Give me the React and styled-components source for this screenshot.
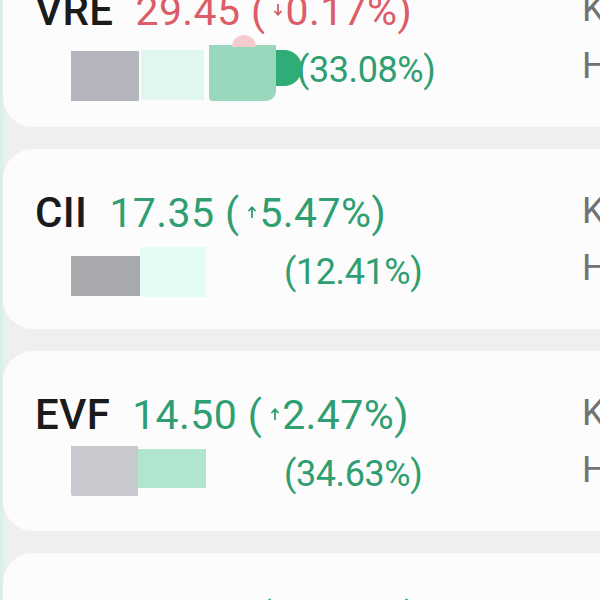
import React from 'react'
import styled, { createGlobalStyle } from 'styled-components'

const Global = createGlobalStyle`
    html, body {
        margin: 0;
        padding: 0;
        height: 600px;
        overflow: hidden;
        background: linear-gradient(to right, #d6efe5 0, #e6f1ec 4px, #efefef 9px);
        font-family: Roboto, "Liberation Sans", sans-serif;
    }
`

const List = styled.div`
    display: flex;
    flex-direction: column;
    gap: 22px;
    margin-top: -53px;
`

const Card = styled.div`
    margin-left: 3px;
    width: 640px;
    height: 180px;
    box-sizing: border-box;
    background: #fcfcfc;
    border-radius: 30px;
    padding: 40px 0 0 32px;
    display: grid;
    grid-template-columns: 547px auto;
    overflow: hidden;
`

const Main = styled.div`
    display: flex;
    flex-direction: column;
    gap: 14px;
`

const TopRow = styled.div`
    display: flex;
    align-items: baseline;
    height: 47px;
    line-height: 47px;
    font-size: 41px;
    white-space: nowrap;
`

const Ticker = styled.span`
    color: #1b1b1b;
    font-weight: 500;
    font-size: 42px;
    margin-right: 22px;
    letter-spacing: 0.4px;
`

const Price = styled.span`
    color: ${p => (p.$down ? '#dc5c68' : '#2f9e71')};
    letter-spacing: 0.4px;
`

const Arrow = styled.svg`
    width: 8px;
    height: 12px;
    margin: 0 3px 0 9px;
    vertical-align: 9px;
`

const BottomRow = styled.div`
    display: flex;
    align-items: center;
    height: 44px;
    padding-left: 36px;
    font-size: 36px;
    line-height: 44px;
    color: #2f9e71;
    white-space: nowrap;
    letter-spacing: -0.4px;
`

const Redact = styled.div`
    display: flex;
    align-items: flex-start;
    align-self: center;
    height: 50px;
    width: ${p => p.$w}px;
    flex-shrink: 0;
`

const Block = styled.div`
    position: relative;
    flex-shrink: 0;
    width: ${p => p.$w}px;
    height: ${p => p.$h}px;
    margin-top: ${p => p.$top || 0}px;
    margin-left: ${p => p.$gap || 0}px;
    background: ${p => p.$bg};
    border-radius: ${p => p.$r || '0'};
`

const Bump = styled.div`
    position: absolute;
    top: -10px;
    left: 23px;
    width: 24px;
    height: 12px;
    border-radius: 12px 12px 0 0;
    background: #f7cacd;
`

const Side = styled.div`
    display: flex;
    flex-direction: column;
    gap: 13px;
    font-size: 36px;
    line-height: 44px;
    color: #727272;
    white-space: nowrap;
`

const Up = () => (
    <Arrow viewBox="0 0 8 12">
        <path d="M4 11.5V1.5M1 4.5L4 1.2L7 4.5" fill="none" stroke="currentColor" strokeWidth="1.8" strokeLinecap="round" strokeLinejoin="round" />
    </Arrow>
)

const Down = () => (
    <Arrow viewBox="0 0 8 12">
        <path d="M4 0.5V10.5M1 7.5L4 10.8L7 7.5" fill="none" stroke="currentColor" strokeWidth="1.8" strokeLinecap="round" strokeLinejoin="round" />
    </Arrow>
)

const stocks = [
    {
        ticker: 'VRE', price: '29.45', change: '0.17%', down: true, ratio: '(33.08%)', width: 226,
        blocks: [
            { w: 68, h: 50, top: 6, bg: '#b5b6bd' },
            { w: 63, h: 50, top: 5, gap: 2, bg: '#e1f6ed' },
            { w: 67, h: 56, top: 0, gap: 5, bg: '#9ad8bd', bump: true, r: '0 0 10px 4px' },
            { w: 26, h: 36, top: 5, bg: '#2eae76', r: '0 18px 18px 0' },
        ],
    },
    {
        ticker: 'CII', price: '17.35', change: '5.47%', ratio: '(12.41%)', width: 213,
        blocks: [
            { w: 69, h: 40, top: 9, bg: '#a8a9ad' },
            { w: 66, h: 50, top: 0, bg: '#e5fbf5' },
        ],
    },
    {
        ticker: 'EVF', price: '14.50', change: '2.47%', ratio: '(34.63%)', width: 213,
        blocks: [
            { w: 67, h: 50, top: -3, bg: '#c8c9ce', r: '0 0 0 2px' },
            { w: 68, h: 39, top: 0, bg: '#b0e6cd' },
        ],
    },
    {
        ticker: 'CHP', price: '25.10', change: '1.20%', ratio: '(20.15%)', width: 213,
        blocks: [],
    },
]

function App() {
    return (
        <>
            <Global />
            <List>
                {stocks.map(s => (
                    <Card key={s.ticker}>
                        <Main>
                            <TopRow>
                                <Ticker>{s.ticker}</Ticker>
                                <Price $down={s.down}>
                                    {s.price} ({s.down ? <Down /> : <Up />}{s.change})
                                </Price>
                            </TopRow>
                            <BottomRow>
                                <Redact $w={s.width}>
                                    {s.blocks.map((b, i) => (
                                        <Block key={i} $w={b.w} $h={b.h} $top={b.top} $gap={b.gap} $bg={b.bg} $r={b.r}>
                                            {b.bump ? <Bump /> : null}
                                        </Block>
                                    ))}
                                </Redact>
                                {s.ratio}
                            </BottomRow>
                        </Main>
                        <Side>
                            <span>KL</span>
                            <span>HS</span>
                        </Side>
                    </Card>
                ))}
            </List>
        </>
    )
}

export default App
